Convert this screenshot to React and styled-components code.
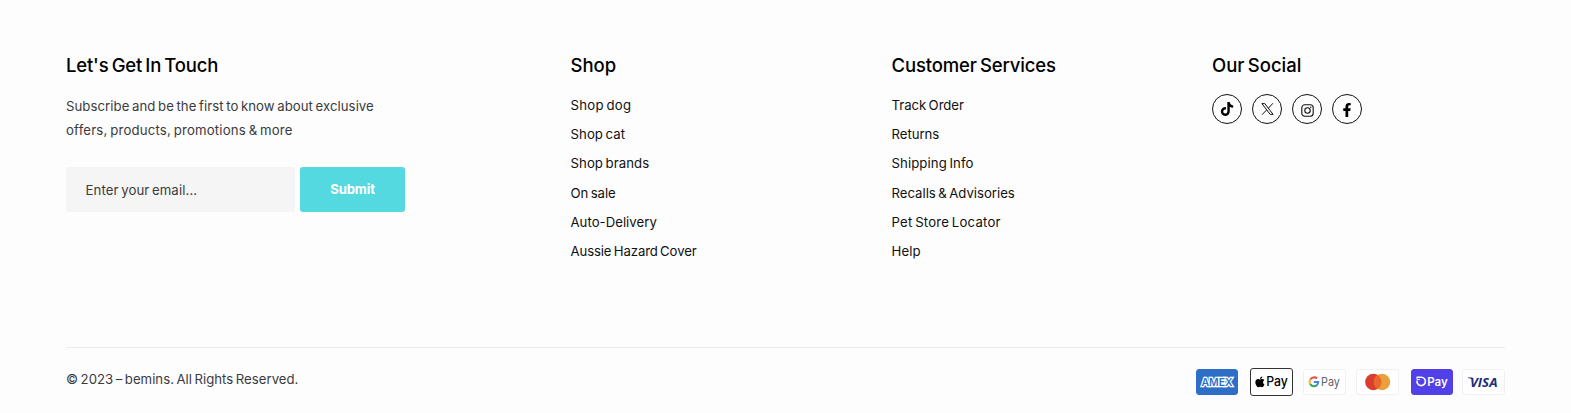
import React from "react";
import styled, { createGlobalStyle } from "styled-components";
import { FaTiktok, FaFacebookF } from "react-icons/fa";

const GlobalStyle = createGlobalStyle`
  *, *::before, *::after { box-sizing: border-box; }
  body {
    margin: 0;
    background: #fdfdfd;
    color: #111;
    font: 400 13.2px/24px Inter, "Open Sans", sans-serif;
    word-spacing: -1.2px;
  }
`;

const Footer = styled.footer`
  height: 413px;
  padding: 52px 66px 0;
  display: flex;
  flex-direction: column;
`;

const Columns = styled.div`
  display: grid;
  grid-template-columns: 504.5px 321px 320.5px 1fr;
  height: 295px;
`;

const Column = styled.section`
  display: flex;
  flex-direction: column;
  align-items: flex-start;
`;

const Heading = styled.h2`
  margin: 0;
  font-size: 18.5px;
  font-weight: 500;
  line-height: 26px;
  color: #000;
  white-space: nowrap;
  word-spacing: -1.6px;
  letter-spacing: ${(p) => p.$track}px;
`;

const Intro = styled.p`
  margin: 16px 0 25px;
  color: #3b3b3d;
`;

const Line = styled.span`
  display: block;
  white-space: nowrap;
  letter-spacing: ${(p) => p.$track}px;
`;

const Form = styled.form`
  display: flex;
  gap: 5px;
`;

const Email = styled.input`
  width: 229px;
  height: 45px;
  padding: 1px 19.5px 0;
  border: 0;
  border-radius: 3px;
  background: #f5f5f5;
  font: inherit;
  word-spacing: -1.3px;
  letter-spacing: 0.11px;
  &::placeholder { color: #3b3b3d; opacity: 1; }
`;

const Submit = styled.button`
  width: 105px;
  height: 45px;
  padding: 0 0 1px;
  border: 0;
  border-radius: 3px;
  background: #55d9e0;
  color: #fff;
  font: inherit;
  font-weight: 700;
  letter-spacing: -0.15px;
`;

const Links = styled.ul`
  list-style: none;
  margin: 12.8px 0 0;
  padding: 0;
`;

const LinkRow = styled.li`
  height: 29.25px;
  line-height: 29.25px;
`;

const Link = styled.a`
  color: #111;
  text-decoration: none;
  white-space: nowrap;
  letter-spacing: ${(p) => p.$track}px;
`;

const Socials = styled.div`
  display: flex;
  gap: 10px;
  margin-top: 16px;
`;

const SocialLink = styled.a`
  display: flex;
  align-items: center;
  justify-content: center;
  width: 30px;
  height: 30px;
  padding-top: ${(p) => p.$drop || 0}px;
  border: 1px solid #111;
  border-radius: 50%;
  color: #000;
`;

const Bottom = styled.div`
  display: flex;
  justify-content: space-between;
  align-items: flex-start;
  border-top: 1px solid #ececec;
`;

const Copyright = styled.p`
  margin: 19px 0 0;
  color: #3b3b3d;
  letter-spacing: 0.01px;
`;

const Payments = styled.div`
  display: flex;
  align-items: center;
  height: 28px;
  margin-top: 20px;
`;

const Card = styled.div`
  width: ${(p) => p.$w}px;
  height: ${(p) => p.$h || 26}px;
  margin-left: ${(p) => p.$gap || 0}px;
  border: 1px solid ${(p) => p.$edge || "#f0f0f0"};
  border-radius: 3px;
  background: ${(p) => p.$bg || "#fff"};
  display: flex;
  align-items: center;
  justify-content: center;
  svg { display: block; flex: none; }
`;

const shop = [
  ["Shop dog", 0.25], ["Shop cat", 0.06], ["Shop brands", 0.06],
  ["On sale", -0.06], ["Auto-Delivery", 0.02], ["Aussie Hazard Cover", -0.13],
];
const services = [
  ["Track Order", -0.05], ["Returns", -0.05], ["Shipping Info", 0.08],
  ["Recalls & Advisories", -0.02], ["Pet Store Locator", 0.2], ["Help", 0.1],
];

const LinkList = ({ items }) => (
  <Links>
    {items.map(([label, track]) => (
      <LinkRow key={label}><Link $track={track}>{label}</Link></LinkRow>
    ))}
  </Links>
);

const XIcon = () => (
  <svg width="13" height="12" viewBox="0 0 13 12" fill="none" stroke="#111">
    <path d="M.9.6h2.900l8.300 10.800H9.200z" strokeWidth="1" />
    <path d="M11.900.3 7.300 5.300M5.600 7 1 11.700" strokeWidth="1" />
  </svg>
);

const InstagramIcon = () => (
  <svg width="13" height="13" viewBox="0 0 13 13" fill="none" stroke="#111" strokeWidth="1.1">
    <rect x=".8" y=".8" width="11.4" height="11.4" rx="3" />
    <circle cx="6.5" cy="6.5" r="2.7" />
    <circle cx="9.8" cy="3.2" r=".7" fill="#111" stroke="none" />
  </svg>
);

const Amex = () => (
  <svg width="40" height="24" viewBox="0 0 40 24">
    <text x="20" y="16" textAnchor="middle" textLength="31" lengthAdjust="spacingAndGlyphs"
      fontFamily="Inter" fontWeight="600" fontSize="10.8" fill="#2d6fc7" stroke="#fff"
      strokeWidth="2.5" strokeLinejoin="miter" paintOrder="stroke">AMEX</text>
  </svg>
);

const ApplePay = () => (
  <svg width="41" height="26" viewBox="0 0 41 26">
    <g transform="translate(4.3 6.6) scale(.0245)">
      <path d="M319 269c0-37 16-65 50-85-19-27-47-42-85-45-36-3-75 21-89 21-15 0-50-20-77-20C62 141 2 184 2 273c0 26 5 53 14 81 13 36 58 126 106 124 25-1 42-18 75-18 31 0 47 18 75 18 48-1 90-82 102-118-65-31-55-90-55-91zM262 105c27-32 25-62 24-73-24 1-52 16-68 35-17 20-28 44-25 71 26 2 50-11 69-33z" />
    </g>
    <text x="15.2" y="17.3" fontFamily="Inter" fontWeight="500" fontSize="13" textLength="21.6" lengthAdjust="spacingAndGlyphs">Pay</text>
  </svg>
);

const GooglePay = () => (
  <svg width="41" height="24" viewBox="0 0 41 24">
    <g fill="none" strokeWidth="2">
      <path d="M13 8.5A4.4 4.4 0 0 0 6.2 9.6" stroke="#e64a3b" />
      <path d="M6.2 9.6a4.4 4.4 0 0 0 0 4.5" stroke="#f6b81a" />
      <path d="M6.2 14.1a4.4 4.4 0 0 0 6.6 1.2" stroke="#36a455" />
      <path d="M12.6 15.4a4.2 4.2 0 0 0 1.6-3.5h-4.3" stroke="#4284ef" />
    </g>
    <text x="17.1" y="16.4" fontFamily="Inter" fontSize="12.2" fill="#606368" textLength="18.8" lengthAdjust="spacingAndGlyphs">Pay</text>
  </svg>
);

const Mastercard = () => (
  <svg width="41" height="24" viewBox="0 0 41 24">
    <circle cx="16.3" cy="12" r="8.2" fill="#dc3c2d" />
    <circle cx="25" cy="12" r="8.2" fill="#eca03c" />
    <path d="M20.65 5.05a8.2 8.2 0 0 1 0 13.9 8.2 8.2 0 0 1 0-13.9z" fill="#e8682c" />
  </svg>
);

const ShopPay = () => (
  <svg width="40" height="24" viewBox="0 0 40 24" fill="none" stroke="#fff" strokeWidth="1.6">
    <path d="M4.6 7.2h4.6a4.2 4.2 0 1 1-4.1 3.4" />
    <path d="M5 7.400v2.200h3" strokeWidth="1" />
    <text x="15.2" y="15.7" stroke="none" fontFamily="Inter" fontWeight="600" fontSize="11.8" fill="#fff" textLength="20.5" lengthAdjust="spacingAndGlyphs">Pay</text>
  </svg>
);

const Visa = () => (
  <svg width="41" height="24" viewBox="0 0 41 24">
    <path d="M4.8 7.5h4.6l1 2.6C8.7 8.8 6.8 8.2 4.8 7.9z" fill="#1c2d78" />
    <text x="7" y="16.6" fontFamily="Open Sans" fontWeight="700" fontStyle="italic" fontSize="12.8" fill="#1c2d78" textLength="27.5" lengthAdjust="spacingAndGlyphs">VISA</text>
  </svg>
);

export default function App() {
  return (
    <>
      <GlobalStyle />
      <Footer>
        <Columns>
          <Column>
            <Heading $track={-0.17}>Let's Get In Touch</Heading>
            <Intro>
              <Line $track={0.055}>Subscribe and be the first to know about exclusive</Line>
              <Line $track={0.19}>offers, products, promotions &amp; more</Line>
            </Intro>
            <Form>
              <Email type="email" placeholder="Enter your email..." />
              <Submit type="button">Submit</Submit>
            </Form>
          </Column>
          <Column>
            <Heading $track={0}>Shop</Heading>
            <LinkList items={shop} />
          </Column>
          <Column>
            <Heading $track={-0.14}>Customer Services</Heading>
            <LinkList items={services} />
          </Column>
          <Column>
            <Heading $track={0}>Our Social</Heading>
            <Socials>
              <SocialLink aria-label="TikTok"><FaTiktok size={14} /></SocialLink>
              <SocialLink aria-label="X"><XIcon /></SocialLink>
              <SocialLink $drop={2} aria-label="Instagram"><InstagramIcon /></SocialLink>
              <SocialLink $drop={1} aria-label="Facebook"><FaFacebookF size={14} /></SocialLink>
            </Socials>
          </Column>
        </Columns>
        <Bottom>
          <Copyright>© 2023 – bemins. All Rights Reserved.</Copyright>
          <Payments>
            <Card $w={42} $bg="#2d6fc7" $edge="#2d6fc7"><Amex /></Card>
            <Card $w={43} $h={28} $gap={11.5} $edge="#333"><ApplePay /></Card>
            <Card $w={43} $gap={10.5}><GooglePay /></Card>
            <Card $w={43} $gap={10}><Mastercard /></Card>
            <Card $w={42} $gap={12} $bg="#5140e8" $edge="#5140e8"><ShopPay /></Card>
            <Card $w={43} $gap={9}><Visa /></Card>
          </Payments>
        </Bottom>
      </Footer>
    </>
  );
}
